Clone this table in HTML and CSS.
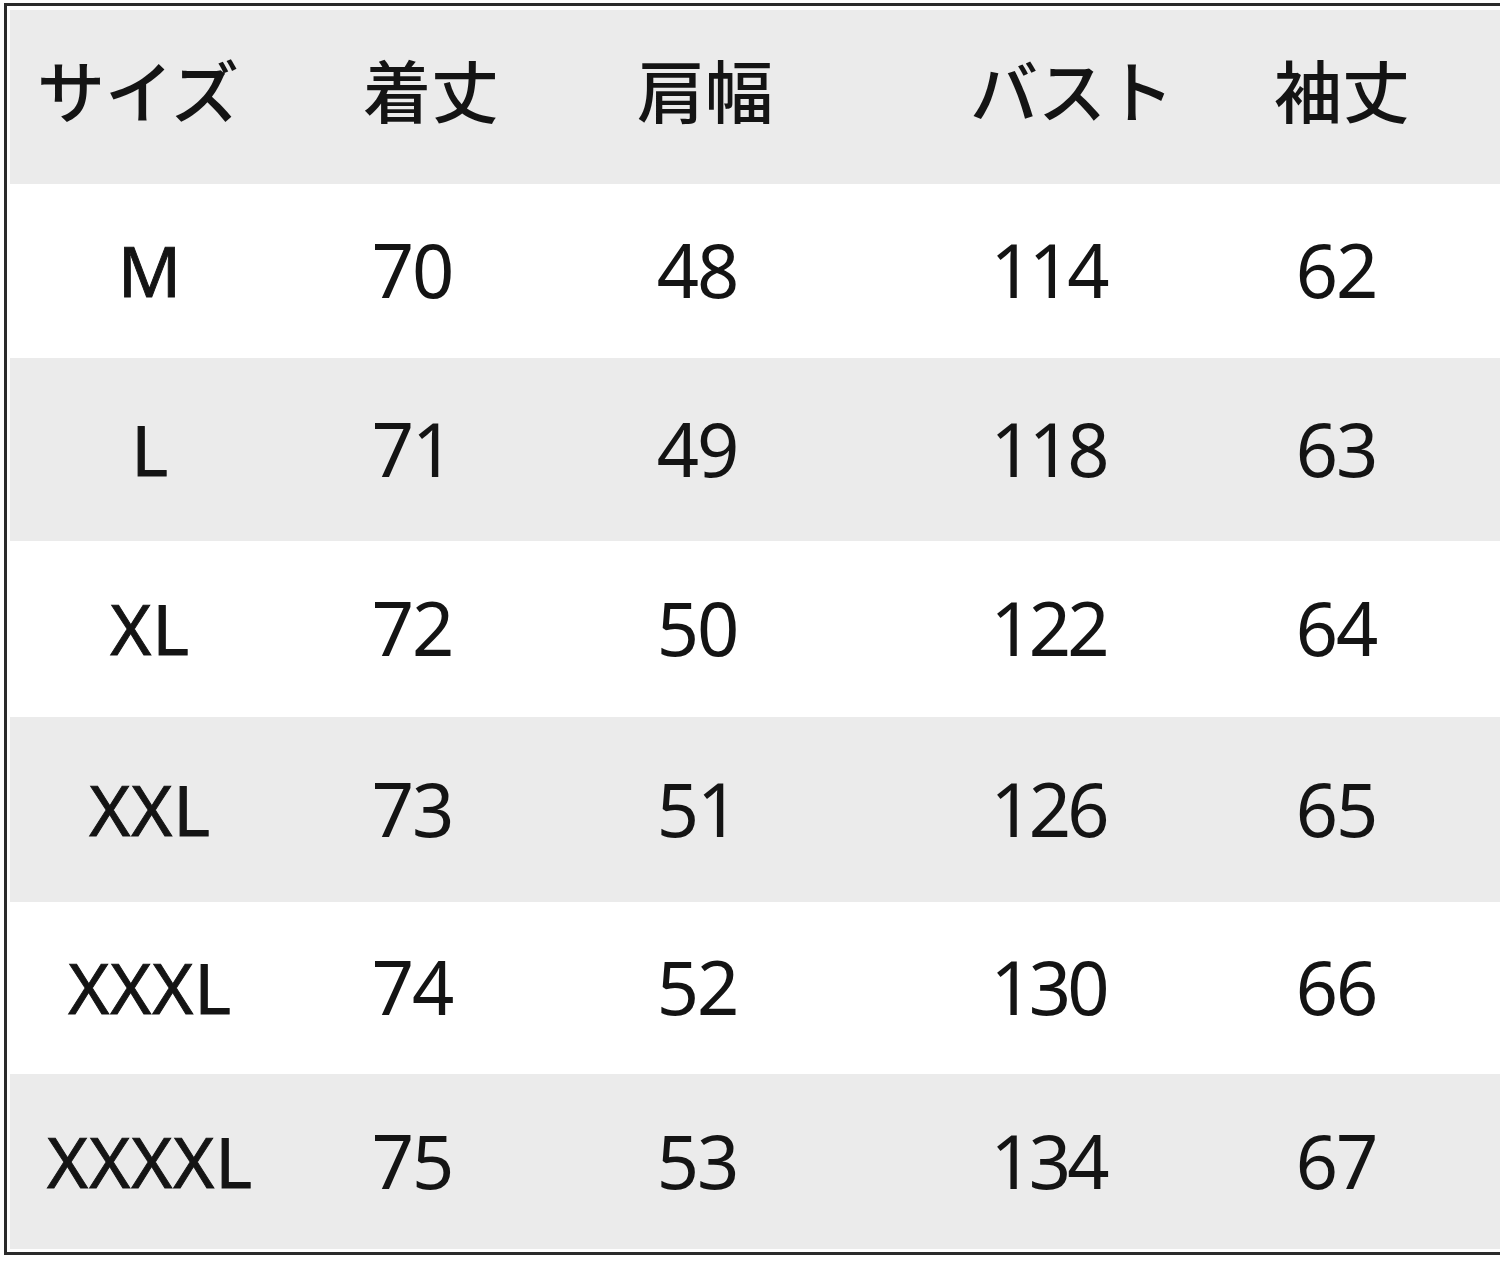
FILE: index.html
```html
<!DOCTYPE html>
<html lang="ja">
<head>
<meta charset="utf-8">
<title>サイズ表</title>
<link rel="stylesheet" href="styles.css">
</head>
<body>
<div class="frame">
  <div class="table">
    <div class="row head">
      <div class="cell c1">サイズ</div>
      <div class="cell c2">着丈</div>
      <div class="cell c3">肩幅</div>
      <div class="cell c4">バスト</div>
      <div class="cell c5">袖丈</div>
    </div>
    <div class="row">
      <div class="cell c1">M</div>
      <div class="cell c2">70</div>
      <div class="cell c3">48</div>
      <div class="cell c4">114</div>
      <div class="cell c5">62</div>
    </div>
    <div class="row">
      <div class="cell c1">L</div>
      <div class="cell c2">71</div>
      <div class="cell c3">49</div>
      <div class="cell c4">118</div>
      <div class="cell c5">63</div>
    </div>
    <div class="row">
      <div class="cell c1">XL</div>
      <div class="cell c2">72</div>
      <div class="cell c3">50</div>
      <div class="cell c4">122</div>
      <div class="cell c5">64</div>
    </div>
    <div class="row">
      <div class="cell c1">XXL</div>
      <div class="cell c2">73</div>
      <div class="cell c3">51</div>
      <div class="cell c4">126</div>
      <div class="cell c5">65</div>
    </div>
    <div class="row">
      <div class="cell c1">XXXL</div>
      <div class="cell c2">74</div>
      <div class="cell c3">52</div>
      <div class="cell c4">130</div>
      <div class="cell c5">66</div>
    </div>
    <div class="row">
      <div class="cell c1">XXXXL</div>
      <div class="cell c2">75</div>
      <div class="cell c3">53</div>
      <div class="cell c4">134</div>
      <div class="cell c5">67</div>
    </div>
  </div>
</div>
</body>
</html>
```
FILE: styles.css
```css
html, body {
  margin: 0;
  padding: 0;
  background: #ffffff;
  overflow: hidden;
}

body {
  font-family: "Noto Sans", "Noto Sans CJK JP", sans-serif;
  color: #141414;
}

.frame {
  margin: 3px 0 0 4px;
  width: 1510px;
  border-top: 3px solid #2a2a2a;
  border-left: 3px solid #2a2a2a;
  border-bottom: 3px solid #2a2a2a;
  padding: 4px 0 3px 3px;
  background: #ffffff;
}

.table {
  display: flex;
  flex-direction: column;
}

.row {
  display: grid;
  grid-template-columns: 280px 244px 326px 376px 200px 1fr;
  align-items: center;
  background: #ffffff;
}

.row:nth-child(odd) {
  background: #ebebeb;
}

.row:nth-child(1) { height: 174px; }
.row:nth-child(2) { height: 174px; }
.row:nth-child(3) { height: 183px; }
.row:nth-child(4) { height: 176px; }
.row:nth-child(5) { height: 185px; }
.row:nth-child(6) { height: 172px; }
.row:nth-child(7) { height: 175px; }

.cell {
  display: flex;
  justify-content: center;
  white-space: nowrap;
  font-size: 74px;
  font-weight: 400;
  line-height: 1;
  padding-bottom: 2px;
  letter-spacing: -2px;
}

.cell.c4 {
  letter-spacing: -4px;
}

.cell.c1 {
  font-size: 70px;
  font-weight: 400;
  letter-spacing: 1px;
  -webkit-text-stroke: 0.9px #141414;
}

.head .cell {
  font-family: "Noto Sans CJK JP", sans-serif;
  font-size: 68px;
  font-weight: 500;
  letter-spacing: 0;
  padding-bottom: 16px;
  -webkit-text-stroke: 0;
}

.head .c1 { padding-right: 24px; }
.head .c2 { padding-left: 38px; }
.head .c3 { padding-left: 16px; }
.head .c4 { padding-left: 48px; }
.head .c5 { padding-left: 12px; }
```
